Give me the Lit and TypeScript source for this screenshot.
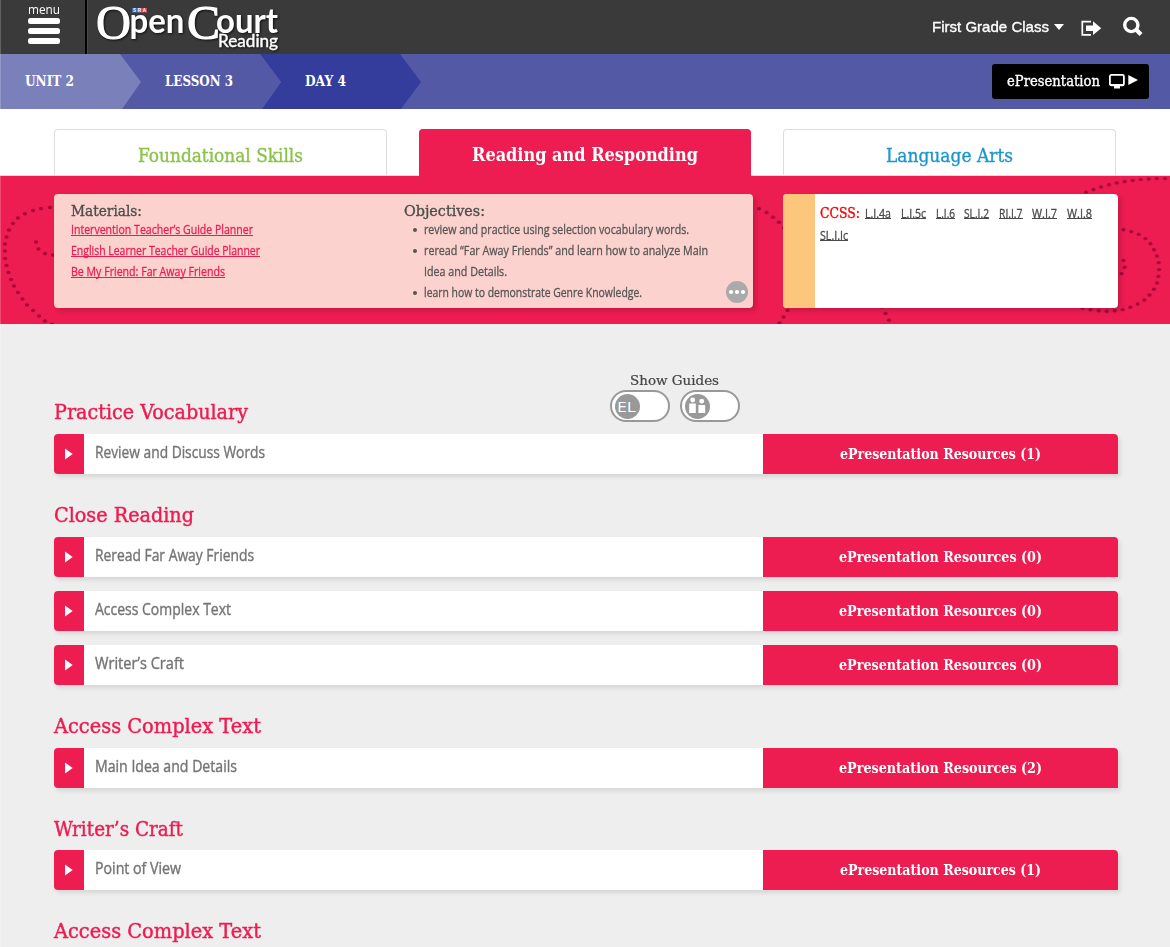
import { LitElement, html, svg, css } from "lit";
import { customElement, property } from "lit/decorators.js";

/** A single line of text condensed or widened to a given measure. */
@customElement("fit-text")
class FitText extends LitElement {
  @property({ type: Number }) w = 100;
  static styles = css`
    :host { display: inline-block; white-space: nowrap; vertical-align: top; text-align: left; }
    .t { display: inline-block; transform-origin: 0 50%; }
  `;
  firstUpdated() {
    const t = this.renderRoot.querySelector(".t") as HTMLElement;
    this.style.width = this.w + "px";
    t.style.transform = `scaleX(${this.w / t.getBoundingClientRect().width})`;
  }
  render() {
    return html`<span class="t"><slot></slot></span>`;
  }
}

const DOTS: number[][] = [
  [50, 207.5], [41, 208.5], [33, 210.5], [25, 213.8], [18, 218], [13, 223.5], [9, 230], [6.5, 237], [5, 244], [5, 251],
  [5, 258.5], [6.5, 265.5], [8.5, 272.5], [11, 279.5], [14, 286], [18, 292.5], [22.5, 299], [27, 305], [33, 310.5],
  [39, 316], [45, 321], [52, 324.5], [36, 242], [38.5, 249], [45, 253.5], [53, 255],
  [751, 205], [759, 208.7], [766.5, 212.5], [773, 217.2], [779, 222.3], [784, 228], [787.5, 310.5], [783.5, 317], [779.5, 323],
  [882, 307], [885.5, 313.5], [889, 320.2],
  [1086, 192.2], [1093.5, 189.5], [1101, 187], [1109, 184.7], [1116.7, 182.9], [1124.7, 181.5], [1132.7, 180.5],
  [1140.7, 179.6], [1148.7, 179], [1156.7, 178.6], [1165, 178.6],
  [1123.5, 229.8], [1131.3, 231.6], [1138.7, 234.4], [1145.4, 238.6], [1150.5, 243.8], [1154, 249.8], [1157, 256],
  [1158.7, 262.6], [1159, 269.6], [1158.4, 276.4], [1157, 283], [1154, 289.2], [1149.5, 295], [1144.3, 300],
  [1137.7, 304], [1130.3, 307.3], [1122.7, 309.6], [1114.7, 310.8], [1106.7, 311.2], [1098.7, 310.8], [1090.5, 309.8],
  [1082.5, 308], [1123.5, 260.4], [1124.7, 267.2], [1121.6, 273.6],
];

type Row = [string, number, number];
type Section = { title: string; w: number; rows: Row[] };

const SECTIONS: Section[] = [
  { title: "Practice Vocabulary", w: 194, rows: [["Review and Discuss Words", 170, 1]] },
  {
    title: "Close Reading", w: 140,
    rows: [["Reread Far Away Friends", 159, 0], ["Access Complex Text", 136, 0], ["Writer’s Craft", 89, 0]],
  },
  { title: "Access Complex Text", w: 207, rows: [["Main Idea and Details", 142, 2]] },
  { title: "Writer’s Craft", w: 129, rows: [["Point of View", 86, 1]] },
  { title: "Access Complex Text", w: 207, rows: [] },
];

const STANDARDS: [string, number][] = [
  ["L.I.4a", 26], ["L.I.5c", 25], ["L.I.6", 19], ["SL.I.2", 25], ["RI.I.7", 23.5], ["W.I.7", 25], ["W.I.8", 25], ["SL.I.Ic", 28],
];

@customElement("app-root")
class AppRoot extends LitElement {
  static styles = css`
    :host { display: block; height: 947px; overflow: hidden; position: relative; background: #eee; font-family: "Open Sans", sans-serif; }
    * { box-sizing: border-box; }
    .edge { position: absolute; left: 0; top: 0; width: 1px; height: 947px; background: rgba(255,255,255,.2); z-index: 3; }
    .slab { font-family: "DejaVu Serif", serif; }
    header { height: 54px; background: #3a3a3a; display: flex; color: #fff; }
    .menu { width: 87px; height: 54px; border-right: 2px solid #000; box-shadow: 1px 0 #4a4a4a; display: flex; flex-direction: column; align-items: center; padding: 1px 0 0 2px; font-size: 13px; line-height: 16px; }
    .bars { display: flex; flex-direction: column; gap: 4.3px; padding-top: .5px; }
    .bars i { width: 32px; height: 6px; border-radius: 2.5px; background: #fff; }
    .logo { margin-left: 5px; display: block; overflow: visible; }
    .tools { margin-left: auto; display: flex; padding-right: 27px; }
    .cls { font: 15px/20px "Liberation Sans", sans-serif; padding-top: 17px; -webkit-text-stroke: .35px #fff; }
    .tools svg { display: block; }
    .crumbs { height: 55px; background: #5459a6; display: flex; color: #fff; }
    .trail { display: block; width: 422px; height: 55px; }
    .trail text { font: bold 14px "DejaVu Serif", serif; fill: #fff; }
    .ep { margin: 10px 21px 0 auto; width: 157px; height: 35px; border-radius: 3px; background: #000; display: flex; padding-left: 15px; font-size: 14px; line-height: 34px; -webkit-text-stroke: .35px #fff; }
    .ep svg { margin: 9px 0 0 8px; }
    .tabs { height: 67px; background: #fff; border-bottom: 1px solid #ddd; display: flex; gap: 32px; padding: 20px 54px 0; }
    .tab { flex: 1; height: 46px; border: 1px solid #ddd; border-bottom: 0; border-radius: 4px 4px 0 0; text-align: center; font-size: 18px; line-height: 52px; }
    .tab.green { color: #8bc34a; -webkit-text-stroke: .35px #8bc34a; }
    .tab.blue { color: #1c96cc; -webkit-text-stroke: .35px #1c96cc; }
    .tab.on { background: #ed1c51; border-color: #ed1c51; color: #fff; font-weight: bold; height: 47px; line-height: 50px; }
    .band { height: 148px; background: #ed1c51; position: relative; display: flex; gap: 30px; padding: 18px 52px 0 54px; }
    .dots { position: absolute; left: 0; top: 0; }
    .card { position: relative; height: 114px; border-radius: 4px; box-shadow: 3px 3px 5px rgba(0,0,0,.16); overflow: hidden; }
    .lesson { width: 699px; background: #fcd2ce; display: flex; padding: 7px 5px 0 17px; color: #555; }
    .mat { width: 333px; }
    .cap { font-size: 14px; line-height: 20px; height: 18px; color: #4d4d4d; -webkit-text-stroke: .35px #4d4d4d; }
    .ln { font-size: 12.5px; line-height: 21px; height: 21px; -webkit-text-stroke: .3px #555; }
    .mat .ln { color: #ed1c51; -webkit-text-stroke-color: #ed1c51; }
    .mat .ln fit-text { height: 17px; border-bottom: 1px solid #ed1c51; }
    .obj { flex: 1; }
    .obj .ln { display: flex; align-items: center; padding-left: 9px; }
    .obj .ln::before { content: ""; width: 4px; height: 4px; border-radius: 50%; background: #555; margin-right: 7px; }
    .obj .ln.cont::before { background: none; }
    .more { position: absolute; right: 5px; bottom: 5px; }
    .ccss { width: 335px; background: #fff; display: flex; }
    .stripe { width: 32px; background: #fcc77c; }
    .std { flex: 1; padding: 8px 10px 0 5px; display: flex; flex-wrap: wrap; align-content: flex-start; color: #4a4a4a; font-size: 12px; -webkit-text-stroke: .3px #4a4a4a; }
    .std .lbl { color: #f00; font-size: 14px; line-height: 22px; margin-right: 5px; -webkit-text-stroke: .35px #f00; }
    .std .s { height: 17px; margin: 0 9.8px 5px 0; line-height: 23px; border-bottom: 1px solid #4a4a4a; }
    .guides { position: absolute; left: 610px; top: 371px; width: 130px; text-align: center; font-size: 13px; line-height: 19px; color: #444; -webkit-text-stroke: .2px #444; }
    .guides > fit-text { margin-right: 1px; }
    .toggles { display: flex; gap: 10px; }
    .toggle { width: 60px; height: 32px; border: 2px solid #999; border-radius: 16px; background: #fff; padding: 1.5px 3px; display: flex; -webkit-text-stroke: 0; }
    main { padding: 47.25px 52px 0 54px; }
    h2 { margin: 0; height: 62.75px; padding-top: 29.2px; font-weight: normal; font-size: 20px; line-height: 24px; color: #ed1c51; -webkit-text-stroke: .45px #ed1c51; }
    .row { display: flex; height: 40px; background: #fff; border-radius: 4px 4px 0 4px; box-shadow: 2px 3px 4px rgba(0,0,0,.1); margin-bottom: 14px; }
    .row.last { margin-bottom: 0; }
    .play { width: 30px; background: #ed1c51; border-radius: 4px 0 0 4px; }
    .play svg { display: block; margin: 14px 0 0 11px; }
    .name { flex: 1; padding-left: 11px; font-size: 16px; line-height: 37px; color: #757575; -webkit-text-stroke: .4px #757575; }
    .res { width: 355px; background: #ed1c51; border-radius: 0 4px 0 0; color: #fff; font-weight: bold; font-size: 14px; line-height: 41.5px; text-align: center; }
  `;

  renderRow([name, w, n]: Row, last: boolean) {
    return html`<div class="row ${last ? "last" : ""}">
      <div class="play"><svg width="9" height="13" viewBox="0 0 9 13"><path d="M0 0.500L7.700 6L0 11.500Z" fill="#fff" /></svg></div>
      <div class="name"><fit-text w=${w}>${name}</fit-text></div>
      <div class="res slab"><fit-text w=${n === 1 ? 201 : 203}>ePresentation Resources (${n})</fit-text></div>
    </div>`;
  }

  render() {
    return html`
      <div class="edge"></div>
      <header>
        <div class="menu"><fit-text w="32">menu</fit-text><div class="bars"><i></i><i></i><i></i></div></div>
        <svg class="logo" width="190" height="54" viewBox="92 0 190 54" fill="#fff">
          <g style="filter: drop-shadow(1px 1px 1px #111)">
            <text x="96" y="38.500" font-family="Liberation Serif" font-size="49" textLength="35" lengthAdjust="spacingAndGlyphs" stroke="#fff" stroke-width="1">O</text>
            <text x="129.500" y="32.700" font-family="Lato" font-weight="bold" font-size="34" textLength="55" lengthAdjust="spacingAndGlyphs">pen</text>
            <text x="187" y="38.500" font-family="Liberation Serif" font-size="49" textLength="33" lengthAdjust="spacingAndGlyphs" stroke="#fff" stroke-width="1.200">C</text>
            <text x="216" y="32.700" font-family="Lato" font-weight="bold" font-size="34" textLength="62" lengthAdjust="spacingAndGlyphs">ourt</text>
            <text x="218" y="46.500" font-family="Lato" font-size="16.500" textLength="60" lengthAdjust="spacingAndGlyphs" stroke="#fff" stroke-width=".4">Reading</text>
          </g>
          <rect x="132" y="8" width="5" height="4.500" fill="#3c68b0" /><rect x="137" y="8" width="5" height="4.500" fill="#7a6fa8" /><rect x="142" y="8" width="5" height="4.500" fill="#d2434c" />
          <text x="133" y="11.900" font-family="Liberation Sans" font-weight="bold" font-size="4.500" textLength="13">SRA</text>
        </svg>
        <div class="tools">
          <div class="cls"><fit-text w="117">First Grade Class</fit-text></div>
          <svg width="94" height="54" viewBox="1049 0 94 54" fill="#fff">
            <path d="M1054 24H1064L1059 30Z" />
            <path d="M1091 21.700H1082.300V34.800H1091" fill="none" stroke="#fff" stroke-width="1.700" />
            <path d="M1086 25.500H1093V21.300L1101.200 28.200L1093 35V31H1086Z" />
            <circle cx="1131.300" cy="25" r="6.600" fill="none" stroke="#fff" stroke-width="3.400" />
            <path d="M1136 29.500L1141 34.500" stroke="#fff" stroke-width="4.200" />
          </svg>
        </div>
      </header>
      <div class="crumbs">
        <svg class="trail" viewBox="0 0 422 55">
          <path d="M260 0H400L421 28L401 55H262L281 28Z" fill="#343d9b" />
          <path d="M120 0H260L281 28L262 55H122Z" fill="#5459a6" />
          <path d="M0 0H120L141 28L122 55H0Z" fill="#7a80ba" />
          <text x="25" y="32" textLength="49" lengthAdjust="spacingAndGlyphs">UNIT 2</text>
          <text x="165" y="32" textLength="68" lengthAdjust="spacingAndGlyphs">LESSON 3</text>
          <text x="305" y="32" textLength="41" lengthAdjust="spacingAndGlyphs">DAY 4</text>
        </svg>
        <div class="ep slab"><fit-text w="93">ePresentation</fit-text>
          <svg width="32" height="18" viewBox="0 0 32 18" fill="#fff">
            <rect x="1.900" y="1.900" width="14" height="10.500" rx="1.500" fill="none" stroke="#fff" stroke-width="1.800" />
            <path d="M2 11H16V13H12V15.500H6V13H2Z" /><path d="M20.300 2L30 7L20.300 12Z" />
          </svg>
        </div>
      </div>
      <div class="tabs slab">
        <div class="tab green"><fit-text w="165">Foundational Skills</fit-text></div>
        <div class="tab on"><fit-text w="226">Reading and Responding</fit-text></div>
        <div class="tab blue"><fit-text w="127">Language Arts</fit-text></div>
      </div>
      <div class="band">
        <svg class="dots" width="1170" height="148" viewBox="0 176 1170 148">
          ${DOTS.map(([x, y]) => svg`<ellipse cx=${x} cy=${y} rx="2.100" ry="1.700" fill="#a90538" />`)}
        </svg>
        <div class="card lesson">
          <div class="mat">
            <div class="cap slab"><fit-text w="71">Materials:</fit-text></div>
            <div class="ln"><fit-text w="182">Intervention Teacher’s Guide Planner</fit-text></div>
            <div class="ln"><fit-text w="189">English Learner Teacher Guide Planner</fit-text></div>
            <div class="ln"><fit-text w="154">Be My Friend: Far Away Friends</fit-text></div>
          </div>
          <div class="obj">
            <div class="cap slab"><fit-text w="81">Objectives:</fit-text></div>
            <div class="ln"><fit-text w="265">review and practice using selection vocabulary words.</fit-text></div>
            <div class="ln"><fit-text w="284">reread “Far Away Friends” and learn how to analyze Main</fit-text></div>
            <div class="ln cont"><fit-text w="83">Idea and Details.</fit-text></div>
            <div class="ln"><fit-text w="218">learn how to demonstrate Genre Knowledge.</fit-text></div>
          </div>
          <svg class="more" width="22" height="22" viewBox="0 0 22 22"><circle cx="11" cy="11" r="11" fill="#aaa" /><g fill="#fff"><circle cx="5" cy="11" r="2.100" /><circle cx="11" cy="11" r="2.100" /><circle cx="17" cy="11" r="2.100" /></g></svg>
        </div>
        <div class="card ccss">
          <div class="stripe"></div>
          <div class="std">
            <fit-text class="lbl slab" w="40">CCSS:</fit-text>
            ${STANDARDS.map(([s, w]) => html`<fit-text class="s" w=${w}>${s}</fit-text>`)}
          </div>
        </div>
      </div>
      <div class="guides slab">
        <fit-text w="89">Show Guides</fit-text>
        <div class="toggles">
          <div class="toggle"><svg width="25" height="25" viewBox="0 0 25 25"><circle cx="12.500" cy="12.500" r="12.500" fill="#999" /><text x="2" y="17.500" font-family="Open Sans" font-size="15" textLength="19" lengthAdjust="spacingAndGlyphs" fill="#fff">EL</text></svg></div>
          <div class="toggle"><svg width="25" height="25" viewBox="0 0 25 25"><circle cx="12.500" cy="12.500" r="12.500" fill="#999" /><g fill="#fff"><circle cx="7.700" cy="6" r="2.400" /><circle cx="16.700" cy="7.200" r="2.400" /><rect x="4.200" y="9.500" width="6.600" height="9.500" /><rect x="13.400" y="11" width="6.800" height="8" /></g></svg></div>
        </div>
      </div>
      <main>
        ${SECTIONS.map((s) => html`<section>
          <h2 class="slab"><fit-text w=${s.w}>${s.title}</fit-text></h2>
          ${s.rows.map((r, i) => this.renderRow(r, i === s.rows.length - 1))}
        </section>`)}
      </main>
    `;
  }
}
